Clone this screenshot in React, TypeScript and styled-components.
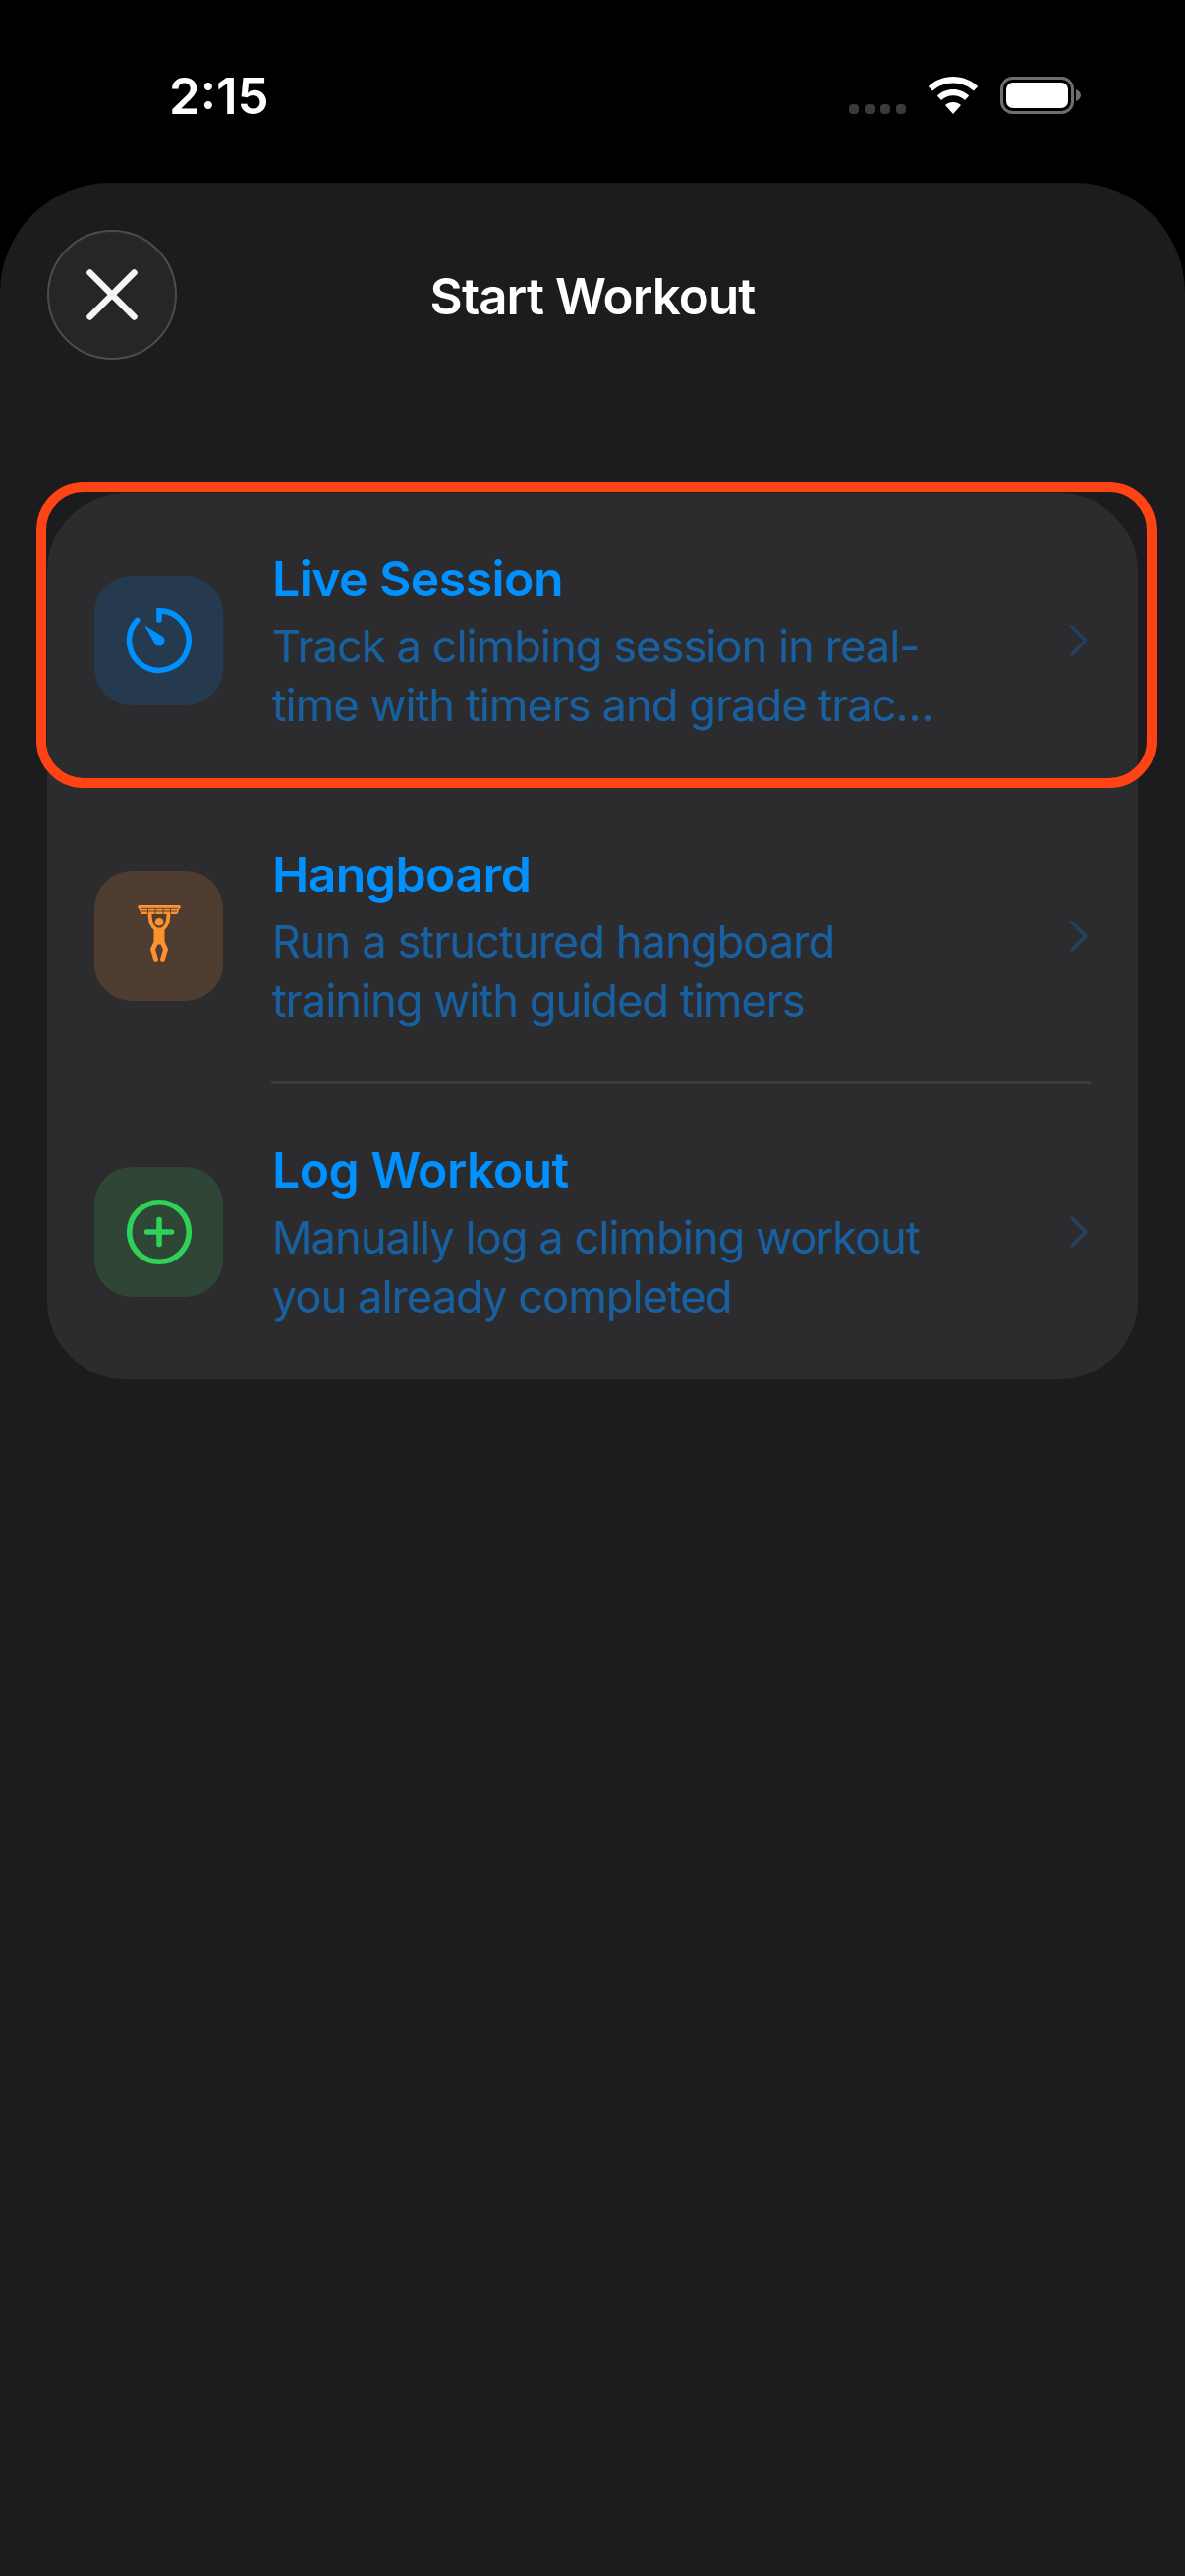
import styled, { createGlobalStyle } from "styled-components";

const Global = createGlobalStyle`
  html, body {
    margin: 0;
    padding: 0;
    background: #000000;
  }
  * {
    box-sizing: border-box;
  }
`;

const Screen = styled.div`
  width: 1206px;
  height: 2622px;
  background: #000000;
  display: flex;
  flex-direction: column;
  overflow: hidden;
  font-family: Inter, "Noto Sans", sans-serif;
`;

const StatusBar = styled.div`
  height: 186px;
  flex: none;
  padding: 0 106px 0 172px;
  display: flex;
  justify-content: space-between;
  align-items: flex-start;
`;

const Time = styled.div`
  margin-top: 68px;
  font-size: 51px;
  line-height: 60px;
  font-weight: 600;
  color: #ffffff;
`;

const StatusIcons = styled.div`
  margin-top: 78px;
  display: flex;
  align-items: flex-start;
  gap: 22px;
`;

const Sheet = styled.div`
  flex: 1;
  background: #1c1c1e;
  border-radius: 112px 112px 0 0;
  padding: 48px 48px 0;
`;

const SheetHeader = styled.div`
  display: flex;
  align-items: center;
  height: 132px;
  position: relative;
`;

const CloseButton = styled.button`
  width: 132px;
  height: 132px;
  padding: 0;
  border-radius: 50%;
  border: 2px solid #4c4c4f;
  background: #262628;
  display: flex;
  align-items: center;
  justify-content: center;
`;

const SheetTitle = styled.div`
  flex: 1;
  margin-right: 132px;
  padding-top: 3px;
  text-align: center;
  font-size: 51px;
  line-height: 60px;
  font-weight: 600;
  letter-spacing: -0.9px;
  color: #ffffff;
`;

const Card = styled.ul`
  list-style: none;
  margin: 136px 0 0;
  padding: 0;
  background: #2c2c2e;
  border-radius: 80px;
  display: flex;
  flex-direction: column;
`;

const Row = styled.li`
  height: 300.67px;
  padding: 0 48px;
  display: flex;
  align-items: center;
  position: relative;
`;

const Tile = styled.div<{ $bg: string }>`
  width: 131px;
  height: 132px;
  flex: none;
  border-radius: 38px;
  background: ${(p) => p.$bg};
  display: flex;
  align-items: center;
  justify-content: center;
`;

const RowText = styled.div`
  width: 690px;
  margin-left: 50px;
  padding-top: 3px;
  display: flex;
  flex-direction: column;
`;

const RowTitle = styled.div`
  font-size: 50px;
  line-height: 60px;
  font-weight: 600;
  letter-spacing: -0.6px;
  color: #0091ff;
`;

const RowSubtitle = styled.div`
  margin-top: 9px;
  font-size: 45px;
  line-height: 60px;
  font-weight: 400;
  letter-spacing: -0.85px;
  color: #18609f;
`;

const Chevron = styled.svg`
  margin-left: auto;
  margin-right: 3px;
  flex: none;
`;

const Separator = styled.div`
  position: absolute;
  left: 228px;
  right: 48px;
  bottom: 0;
  height: 3px;
  background: #3d3d40;
`;

const Highlight = styled.div`
  position: absolute;
  left: -11px;
  right: -19px;
  top: -11px;
  bottom: 1px;
  border: 10px solid #ff4314;
  border-radius: 48px;
`;

function SignalDots() {
  return (
    <svg width="58" height="38" viewBox="0 0 58 38">
      {[0, 16, 32, 48].map((x) => (
        <rect key={x} x={x} y="28" width="10" height="10" rx="4" fill="#3a3a3c" />
      ))}
    </svg>
  );
}

function Wifi() {
  return (
    <svg width="52" height="38" viewBox="0 0 52 38">
      <path
        d="M26 0C16 0 7.400 3.800 .8 10L5 14.600C10.500 9.500 17.800 6.400 26 6.400S41.500 9.500 47 14.600L51.200 10C44.600 3.800 36 0 26 0Z"
        fill="#fff"
      />
      <path
        d="M26 13C19.800 13 14.200 15.400 9.800 19.400L14 24C17.200 21 21.400 19.300 26 19.300S34.800 21 38 24L42.200 19.400C37.800 15.400 32.200 13 26 13Z"
        fill="#fff"
      />
      <path d="M26 26C22.800 26 20.200 27.100 18 29L26 38L34 29C31.800 27.100 29.200 26 26 26Z" fill="#fff" />
    </svg>
  );
}

function Battery() {
  return (
    <svg width="82" height="38" viewBox="0 0 82 38">
      <rect x="1.500" y="1.500" width="72" height="35" rx="11" fill="none" stroke="#6e6e70" strokeWidth="3" />
      <rect x="6" y="6" width="63" height="26" rx="7" fill="#fff" />
      <path d="M77 13C80 14 82 16.500 82 19S80 24 77 25Z" fill="#6e6e70" />
    </svg>
  );
}

function CloseIcon() {
  return (
    <svg width="54" height="54" viewBox="0 0 54 54">
      <path d="M4.500 4.500L49.500 49.500M49.500 4.500L4.500 49.500" stroke="#f4f4f5" strokeWidth="6.500" strokeLinecap="round" fill="none" />
    </svg>
  );
}

function TimerIcon() {
  return (
    <svg width="70" height="70" viewBox="0 0 70 70">
      <path
        d="M12.600 14.400A30.300 30.300 0 1 0 35 4.700V14"
        fill="none"
        stroke="#0091ff"
        strokeWidth="5.600"
        strokeLinecap="round"
      />
      <path d="M20 19.400L38.900 31.100A5.500 5.500 0 0 1 31.100 38.900Z" fill="#0091ff" />
    </svg>
  );
}

function HangIcon() {
  return (
    <svg width="54" height="70" viewBox="0 3 54 70">
      <path
        d="M7.500 6H46.500A1.800 1.800 0 0 1 47.500 9.500L46 13.500A2 2 0 0 1 44 15H10A2 2 0 0 1 8 13.500L6.500 9.500A1.800 1.800 0 0 1 7.500 6Z"
        fill="#ff9230"
      />
      <path d="M8 9.300H46M9 12H45M15.500 9.300V15M23 9.300V15M31 9.300V15M38.500 9.300V15" stroke="#4e3d30" strokeWidth="0.900" fill="none" />
      <circle cx="27" cy="23.300" r="4.300" fill="#ff9230" />
      <path d="M17.500 15C18 22 18.500 27 23 30.500M36.500 15C36 22 35.500 27 31 30.500" stroke="#ff9230" strokeWidth="3.800" strokeLinecap="round" fill="none" />
      <path d="M21.500 29.500H32.500V46.500H21.500Z" fill="#ff9230" />
      <path d="M24 44L20.500 51.500L23.500 61.500M30 44L33.500 51.500L30.500 61.500" stroke="#ff9230" strokeWidth="4.800" strokeLinecap="round" strokeLinejoin="round" fill="none" />
    </svg>
  );
}

function PlusIcon() {
  return (
    <svg width="70" height="70" viewBox="0 0 70 70">
      <circle cx="35" cy="35" r="30.300" fill="none" stroke="#30d158" strokeWidth="5.600" />
      <path d="M35 22.500V47.500M22.500 35H47.500" stroke="#30d158" strokeWidth="5.600" strokeLinecap="round" fill="none" />
    </svg>
  );
}

const rows = [
  {
    title: "Live Session",
    text: "Track a climbing session in real-time with timers and grade trac…",
    bg: "#263a4f",
    icon: <TimerIcon />,
  },
  {
    title: "Hangboard",
    text: "Run a structured hangboard training with guided timers",
    bg: "#4e3d30",
    icon: <HangIcon />,
  },
  {
    title: "Log Workout",
    text: "Manually log a climbing workout you already completed",
    bg: "#2f4636",
    icon: <PlusIcon />,
  },
];

export default function App() {
  return (
    <Screen>
      <Global />
      <StatusBar>
        <Time>2:15</Time>
        <StatusIcons>
          <SignalDots />
          <Wifi />
          <Battery />
        </StatusIcons>
      </StatusBar>
      <Sheet>
        <SheetHeader>
          <CloseButton>
            <CloseIcon />
          </CloseButton>
          <SheetTitle>Start Workout</SheetTitle>
        </SheetHeader>
        <Card>
          {rows.map((r, i) => (
            <Row key={r.title}>
              <Tile $bg={r.bg}>{r.icon}</Tile>
              <RowText>
                <RowTitle>{r.title}</RowTitle>
                <RowSubtitle>{r.text}</RowSubtitle>
              </RowText>
              <Chevron width="18" height="32" viewBox="0 0 18 32">
                <path d="M1.500 1.500L16 16L1.500 30.500" fill="none" stroke="#1f4263" strokeWidth="3.200" strokeLinecap="round" strokeLinejoin="round" />
              </Chevron>
              {i === 1 && <Separator />}
              {i === 0 && <Highlight />}
            </Row>
          ))}
        </Card>
      </Sheet>
    </Screen>
  );
}
